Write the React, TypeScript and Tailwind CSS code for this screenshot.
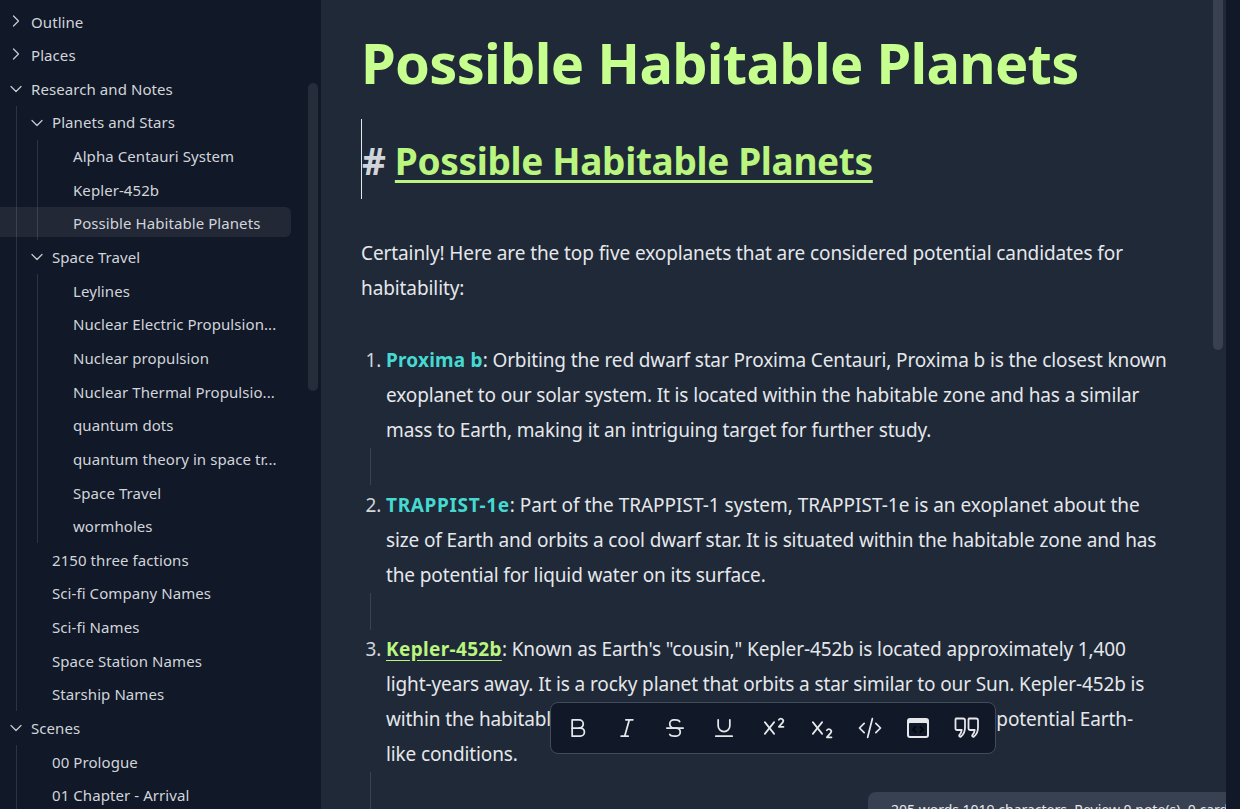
import { ChevronDown, ChevronRight } from "lucide-react";
import {
  TbBold,
  TbCode,
  TbItalic,
  TbStrikethrough,
  TbSubscript,
  TbSuperscript,
  TbUnderline,
} from "react-icons/tb";

type TreeNode = {
  label: string;
  open?: boolean;
  selected?: boolean;
  children?: TreeNode[];
};

const leaf = (label: string): TreeNode => ({ label });

const tree: TreeNode[] = [
  { label: "Outline", open: false },
  { label: "Places", open: false },
  {
    label: "Research and Notes",
    open: true,
    children: [
      {
        label: "Planets and Stars",
        open: true,
        children: [
          leaf("Alpha Centauri System"),
          leaf("Kepler-452b"),
          { label: "Possible Habitable Planets", selected: true },
        ],
      },
      {
        label: "Space Travel",
        open: true,
        children: [
          leaf("Leylines"),
          leaf("Nuclear Electric Propulsion..."),
          leaf("Nuclear propulsion"),
          leaf("Nuclear Thermal Propulsio..."),
          leaf("quantum dots"),
          leaf("quantum theory in space tr..."),
          leaf("Space Travel"),
          leaf("wormholes"),
        ],
      },
      leaf("2150 three factions"),
      leaf("Sci-fi Company Names"),
      leaf("Sci-fi Names"),
      leaf("Space Station Names"),
      leaf("Starship Names"),
    ],
  },
  {
    label: "Scenes",
    open: true,
    children: [leaf("00 Prologue"), leaf("01 Chapter - Arrival")],
  },
];

function TreeItems({ nodes, depth }: { nodes: TreeNode[]; depth: number }) {
  return (
    <>
      {nodes.map((node) => {
        const hasChevron = node.open !== undefined;
        return (
          <div key={node.label + depth}>
            {node.selected ? (
              <div className="-ml-[38px] h-[33.65px] w-[291px] pb-[3px]">
                <div className="flex h-full items-center rounded-r-md bg-white/[0.07] pt-[3px] pl-[73px]">
                  <span className="whitespace-nowrap text-[15px] tracking-[0.005em] text-[#d1d5db]">{node.label}</span>
                </div>
              </div>
            ) : (
              <div className={`flex h-[33.65px] items-center ${hasChevron ? (depth === 0 ? "pl-[6px]" : "pl-[10px]") : "pl-[35px]"}`}>
                {node.open === false && <ChevronRight size={20} strokeWidth={1.5} className="mr-[5px] -mt-0.5 shrink-0 text-[#c5c9d0]" />}
                {node.open === true && <ChevronDown size={20} strokeWidth={1.5} className="mr-[5px] shrink-0 text-[#c5c9d0]" />}
                <span className="whitespace-nowrap text-[15px] tracking-[0.005em] text-[#d1d5db]">{node.label}</span>
              </div>
            )}
            {node.children && (
              <div className={`border-l border-[#2c3442] ${depth === 0 ? "ml-4" : "ml-5"}`}>
                <TreeItems nodes={node.children} depth={depth + 1} />
              </div>
            )}
          </div>
        );
      })}
    </>
  );
}

function Sidebar() {
  return (
    <aside className="relative w-[321px] shrink-0 overflow-hidden bg-[#111827] pt-[5px]">
      <TreeItems nodes={tree} depth={0} />
      <div className="absolute left-[308px] top-[83px] h-[308px] w-[10px] rounded-full bg-[#262d3a]" />
    </aside>
  );
}

function Guide() {
  return <div className="mb-[2.5px] -ml-4 h-[37px] w-px bg-[#3a4352]" />;
}

function Toolbar() {
  const cls = "text-[#e5e7eb]";
  return (
    <div className="absolute left-[229px] top-[702px] flex h-[52px] w-[446px] items-center justify-between rounded-lg border border-[#424b5a] bg-[#111827] pl-[13px] pr-[14px]">
      <TbBold size={28} strokeWidth={1.5} className={cls} />
      <TbItalic size={28} strokeWidth={1.5} className={cls} />
      <TbStrikethrough size={28} strokeWidth={1.5} className={cls} />
      <TbUnderline size={28} strokeWidth={1.5} className={cls} />
      <TbSuperscript size={28} strokeWidth={1.5} className={cls} />
      <TbSubscript size={28} strokeWidth={1.5} className={cls} />
      <TbCode size={28} strokeWidth={1.5} className={cls} />
      <svg width="28" height="28" viewBox="0 0 28 28" className={cls}>
        <rect x="3" y="4" width="22" height="20" rx="3" fill="currentColor" />
        <rect x="5" y="9" width="18" height="13" rx="1" fill="#111827" />
        <path d="M12 12.500l-3 3l3 3M16 12.500l3 3l-3 3" fill="none" stroke="#030712" strokeWidth="1.800" />
      </svg>
      <svg width="28" height="28" viewBox="0 0 28 28" fill="none" stroke="currentColor" strokeWidth="1.8" strokeLinejoin="round" className={cls}>
        <path d="M3 4.500h7a2 2 0 0 1 2 2v7c0 4-1.500 7-4 9c-1 .800-2.500-.500-1.500-1.500c1.200-1.300 2-3 2.200-5h-4.700a1.500 1.500 0 0 1-1.500-1.500v-9a.500.500 0 0 1 .500-.500z" />
        <path d="M16 4.500h7a2 2 0 0 1 2 2v7c0 4-1.500 7-4 9c-1 .800-2.500-.500-1.500-1.500c1.200-1.300 2-3 2.200-5h-4.700a1.500 1.500 0 0 1-1.500-1.500v-9a.500.500 0 0 1 .500-.500z" />
      </svg>
    </div>
  );
}

export default function App() {
  return (
    <div className="flex h-[809px] w-[1240px] overflow-hidden bg-[#111827] font-['Noto_Sans',sans-serif]">
      <Sidebar />
      <main className="relative w-[905px] shrink-0 overflow-hidden bg-[#1f2937] pl-10 text-[19px] leading-[35px] tracking-[-0.005em] text-[#e5e7eb]">
        <h1 className="mt-[24px] h-[76px] whitespace-nowrap text-[56px] leading-[76px] font-bold tracking-[-0.013em] text-[#c6ff8e]">Possible Habitable Planets</h1>
        <div className="mt-[19px] h-[80px] border-l border-[#e5e7eb] text-[37px] leading-[84px] font-bold tracking-[-0.009em] whitespace-nowrap">
          <span className="text-[#d1d5db]"># </span>
          <span className="text-[#b9f57f] underline decoration-[3px] underline-offset-[5px]">Possible Habitable Planets</span>
        </div>
        <p className="mt-[37px]">
          Certainly! Here are the top five exoplanets that are considered potential candidates for<br />habitability:
        </p>
        <ol className="mt-[37px] list-decimal pl-[25px] tracking-[-0.0065em] whitespace-nowrap marker:text-[#d1d5db]">
          <li>
            <b className="tracking-[0.01em] text-[#45d9d2]">Proxima b</b>: Orbiting the red dwarf star Proxima Centauri, Proxima b is the closest known<br />
            exoplanet to our solar system. It is located within the habitable zone and has a similar<br />
            mass to Earth, making it an intriguing target for further study.
            <Guide />
          </li>
          <li>
            <b className="tracking-[0.035em] text-[#45d9d2]">TRAPPIST-1e</b><span className="tracking-[-0.001em]">: Part of the TRAPPIST-1 system, TRAPPIST-1e is an exoplanet about the</span><br />
            size of Earth and orbits a cool dwarf star. It is situated within the habitable zone and has<br />
            the potential for liquid water on its surface.
            <Guide />
          </li>
          <li>
            <b className="tracking-[0.018em] text-[#b9f57f] underline underline-offset-[4px]">Kepler-452b</b>: Known as Earth's "cousin," Kepler-452b is located approximately 1,400<br />
            light-years away. It is a rocky planet that orbits a star similar to our Sun. Kepler-452b is<br />
            within the habitable zone of its star and is believed by many to reveal potential Earth-<br />
            like conditions.
            <Guide />
          </li>
        </ol>
        <Toolbar />
        <div className="absolute right-[3px] top-0 h-[350px] w-[10px] rounded-b-full bg-[#394150]" />
        <div className="absolute left-[547px] top-[792px] h-[40px] w-[400px] rounded-tl-lg bg-[#374151] pl-[23px] pt-[8px] text-[14px] leading-[20px] tracking-normal whitespace-nowrap text-[#e5e7eb]">
          205 words 1019 characters&nbsp;&nbsp;Review 0 note(s), 0 cards
        </div>
      </main>
      <div className="flex-1 bg-[#111827]" />
    </div>
  );
}
